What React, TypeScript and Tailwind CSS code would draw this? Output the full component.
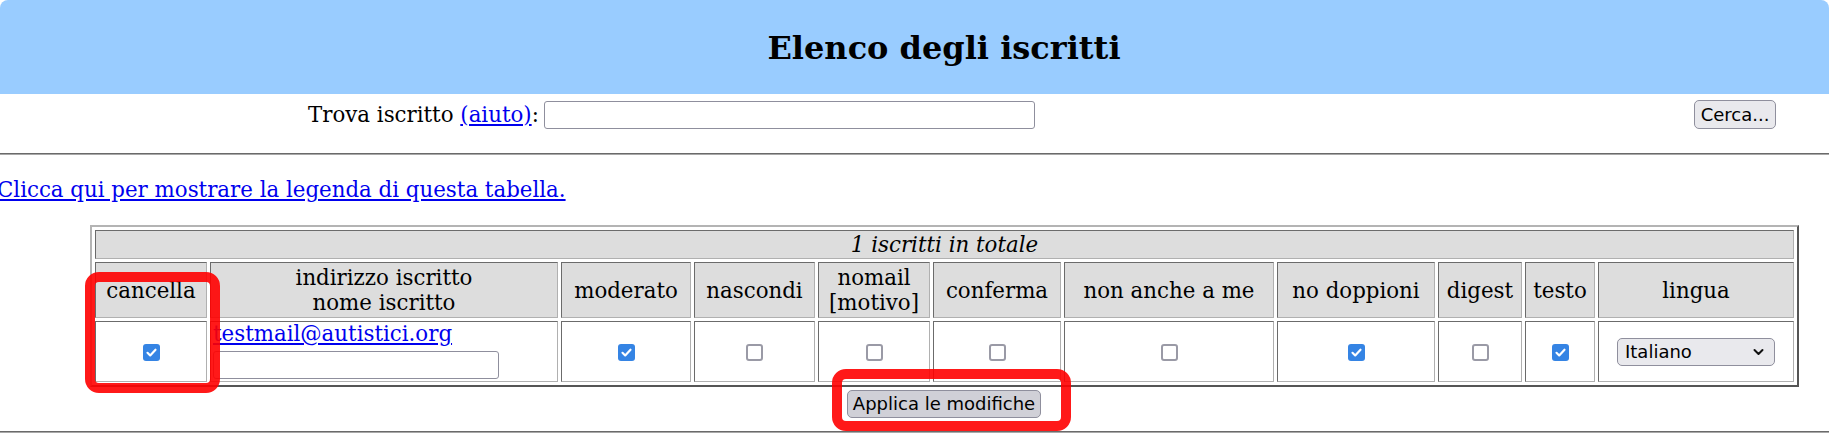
// Mailman membership list, rendered as it looks in the reference screenshot

type Col = { key: string; label: string[]; width: number };

const columns: Col[] = [
  { key: "cancella", label: ["cancella"], width: 112 },
  { key: "indirizzo", label: ["indirizzo iscritto", "nome iscritto"], width: 348 },
  { key: "moderato", label: ["moderato"], width: 130 },
  { key: "nascondi", label: ["nascondi"], width: 121 },
  { key: "nomail", label: ["nomail", "[motivo]"], width: 112 },
  { key: "conferma", label: ["conferma"], width: 128 },
  { key: "nonanche", label: ["non anche a me"], width: 210 },
  { key: "nodoppioni", label: ["no doppioni"], width: 158 },
  { key: "digest", label: ["digest"], width: 84 },
  { key: "testo", label: ["testo"], width: 70 },
  { key: "lingua", label: ["lingua"], width: 196 },
];

const flags: Record<string, boolean> = {
  cancella: true,
  moderato: true,
  nascondi: false,
  nomail: false,
  conferma: false,
  nonanche: false,
  nodoppioni: true,
  digest: false,
  testo: true,
};

const cellBorder =
  "border border-t-[#6b6b6b] border-l-[#6b6b6b] border-b-[#b0b0b0] border-r-[#b0b0b0]";

function Check({ on }: { on: boolean }) {
  if (on) {
    return (
      <span className="inline-flex h-[17px] w-[17px] items-center justify-center rounded-[3px] bg-[#3584e4] align-middle">
        <svg width="13" height="13" viewBox="0 0 12 12" aria-hidden="true">
          <path
            d="M2.3 6.3L4.8 8.7L9.7 3.4"
            fill="none"
            stroke="white"
            strokeWidth="2"
            strokeLinecap="round"
            strokeLinejoin="round"
          />
        </svg>
      </span>
    );
  }
  return (
    <span className="inline-block h-[17px] w-[17px] rounded-[3px] border-2 border-[#9a9aa6] bg-white align-middle" />
  );
}

export default function App() {
  return (
    <div className="relative h-[442px] w-[1829px] overflow-hidden bg-white font-['DejaVu_Serif',serif] text-[21.33px] text-black">
      {/* Title bar */}
      <div className="flex h-[94px] items-center justify-center rounded-t-lg bg-[#99ccff] pl-[59px]">
        <h2 className="pt-[2px] text-[32px] font-bold leading-none">Elenco degli iscritti</h2>
      </div>

      {/* Search row */}
      <div className="flex h-[41px] items-center pl-[308px] pr-[53px]">
        <span className="leading-none">
          Trova iscritto{" "}
          <a href="#" className="text-[#0000ee] underline">
            (aiuto)
          </a>
          :
        </span>
        <input
          type="text"
          className="ml-[5px] h-[28px] w-[491px] rounded-[3px] border border-[#8f8f9d] bg-white"
        />
        <button className="ml-auto h-[29px] w-[82px] rounded-[5px] border border-[#8f8f9d] bg-[#e9e9ed] font-['DejaVu_Sans',sans-serif] text-[18px] leading-none">
          Cerca...
        </button>
      </div>

      <div className="mt-[18px] border-t border-b border-t-[#6a6a6a] border-b-[#a8a8a8]" />

      {/* Legend link */}
      <div className="mt-[23px] -ml-[3px] leading-[24px]">
        <a href="#" className="text-[#0000ee] underline">
          Clicca qui per mostrare la legenda di questa tabella.
        </a>
      </div>

      {/* Members table */}
      <table className="mt-[23px] ml-[90px] table-fixed border-separate border-spacing-[3px] border-2 border-t-[#b4b4b4] border-l-[#b4b4b4] border-b-[#555] border-r-[#555]">
        <tbody>
          <tr>
            <td colSpan={11} className={`${cellBorder} h-[29px] bg-[#dddddd] p-0 text-center italic leading-none`}>
              1 iscritti in totale
            </td>
          </tr>
          <tr>
            {columns.map((c) => (
              <th
                key={c.key}
                style={{ width: c.width }}
                className={`${cellBorder} h-[56px] bg-[#dddddd] p-0 text-center align-middle font-normal leading-[25px]`}
              >
                {c.label.map((l) => (
                  <div key={l}>{l}</div>
                ))}
              </th>
            ))}
          </tr>
          <tr>
            {columns.map((c) => {
              if (c.key === "indirizzo") {
                return (
                  <td key={c.key} className={`${cellBorder} h-[60px] px-[2px] pt-0 align-top`}>
                    <a href="#" className="block leading-[24px] text-[#0000ee] underline">
                      testmail@autistici.org
                    </a>
                    <input
                      type="text"
                      className="mt-[5px] h-[28px] w-[286px] rounded-[3px] border border-[#8f8f9d] bg-white"
                    />
                  </td>
                );
              }
              if (c.key === "lingua") {
                return (
                  <td key={c.key} className={`${cellBorder} h-[60px] text-center align-middle`}>
                    <div className="mx-auto flex h-[28px] w-[158px] items-center justify-between rounded-[5px] border border-[#8f8f9d] bg-[#e9e9ed] pl-[7px] pr-[10px] font-['DejaVu_Sans',sans-serif] text-[18px] leading-none">
                      <span>Italiano</span>
                      <svg width="11" height="8" viewBox="0 0 11 8" aria-hidden="true">
                        <path
                          d="M1.5 2L5.5 6L9.5 2"
                          fill="none"
                          stroke="#111"
                          strokeWidth="2"
                          strokeLinecap="round"
                          strokeLinejoin="round"
                        />
                      </svg>
                    </div>
                  </td>
                );
              }
              return (
                <td key={c.key} className={`${cellBorder} h-[60px] text-center align-middle leading-none`}>
                  <Check on={flags[c.key]} />
                </td>
              );
            })}
          </tr>
        </tbody>
      </table>

      {/* Submit */}
      <div className="mt-[3px] flex justify-center pl-[59px]">
        <button className="h-[28px] w-[194px] rounded-[5px] border border-[#8f8f9d] bg-[#d0d0d7] font-['DejaVu_Sans',sans-serif] text-[18px] leading-none">
          Applica le modifiche
        </button>
      </div>

      <div className="mt-[13px] border-t border-b border-t-[#6a6a6a] border-b-[#a8a8a8]" />

      {/* Red annotation frames */}
      <div className="pointer-events-none absolute left-[85px] top-[272px] h-[121px] w-[135px] rounded-[14px] border-[10px] border-[rgba(255,0,0,0.9)]" />
      <div className="pointer-events-none absolute left-[832px] top-[369px] h-[62px] w-[239px] rounded-[14px] border-[10px] border-[rgba(255,0,0,0.9)]" />
    </div>
  );
}
